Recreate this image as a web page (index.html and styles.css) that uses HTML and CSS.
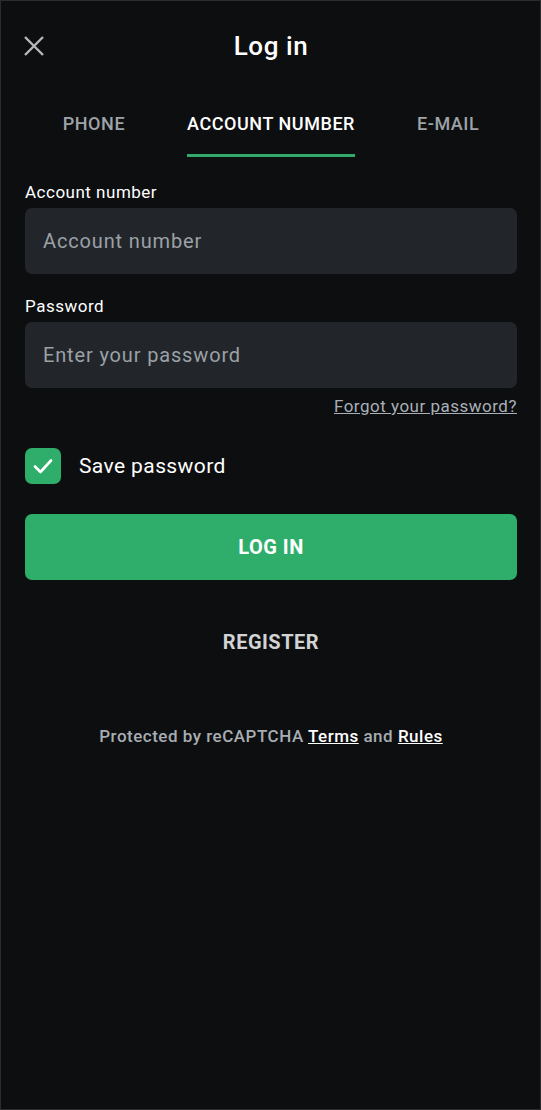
FILE: index.html
```html
<!DOCTYPE html>
<html lang="en">
<head>
    <meta charset="UTF-8">
    <meta name="viewport" content="width=device-width, initial-scale=1.0">
    <title>Log in</title>
    <link rel="stylesheet" href="styles.css">
</head>
<body>
    <div class="modal">
        <div class="header">
            <button class="close" type="button" aria-label="Close">
                <svg width="22" height="22" viewBox="0 0 22 22">
                    <path d="M2 2 L20 20 M20 2 L2 20" stroke="#b4b8bc" stroke-width="2.4" fill="none"/>
                </svg>
            </button>
            <h1>Log in</h1>
        </div>

        <div class="tabs">
            <a href="#" class="tab">Phone</a>
            <a href="#" class="tab active">Account number</a>
            <a href="#" class="tab">E-mail</a>
        </div>

        <form class="form">
            <label for="account">Account number</label>
            <input type="text" id="account" placeholder="Account number">

            <label for="password" class="second">Password</label>
            <input type="password" id="password" placeholder="Enter your password">

            <div class="forgot"><a href="#">Forgot your password?</a></div>

            <div class="save">
                <span class="checkbox">
                    <svg width="22" height="22" viewBox="0 0 22 22">
                        <path d="M3 11.5 L8.5 17 L19 5.5" stroke="#fff" stroke-width="2.6" fill="none" stroke-linecap="round" stroke-linejoin="round"/>
                    </svg>
                </span>
                <span>Save password</span>
            </div>

            <button type="button" class="login">Log in</button>
            <button type="button" class="register">Register</button>

            <p class="captcha">Protected by reCAPTCHA <a href="#">Terms</a> and <a href="#">Rules</a></p>
        </form>
    </div>
</body>
</html>
```

FILE: styles.css
```css
html, body {
    margin: 0;
    padding: 0;
}

body {
    background-color: #0d0e10;
    color: white;
    font-family: Roboto, "Noto Sans", Arial, sans-serif;
    letter-spacing: 0.5px;
}

.modal {
    height: 1110px;
    box-sizing: border-box;
    border: 1px solid #2b2c2e;
    padding: 0 23px 0 24px;
}

.header {
    display: flex;
    align-items: center;
    justify-content: center;
    height: 90px;
    position: relative;
}

.header h1 {
    margin: 0;
    font-size: 26px;
    font-weight: 500;
    letter-spacing: 0.6px;
}

.close {
    position: absolute;
    left: -2px;
    top: 34px;
    background: none;
    border: none;
    padding: 0;
    width: 22px;
    height: 22px;
    cursor: pointer;
}

.tabs {
    display: flex;
    justify-content: center;
    gap: 62px;
    height: 66px;
}

.tab {
    color: #9ea3a8;
    text-decoration: none;
    text-transform: uppercase;
    font-size: 18px;
    font-weight: 500;
    letter-spacing: 0.55px;
    padding-top: 22px;
    box-sizing: border-box;
    height: 66px;
    border-bottom: 3px solid transparent;
}

.tab.active {
    color: white;
    border-bottom-color: #30a96a;
}

.form {
    display: flex;
    flex-direction: column;
    padding-top: 24px;
}

label {
    font-size: 17px;
    line-height: 22px;
    margin-bottom: 5px;
}

label.second {
    margin-top: 21px;
}

input {
    height: 66px;
    box-sizing: border-box;
    border: none;
    border-radius: 7px;
    background-color: #22262a;
    color: white;
    padding: 0 18px;
    font-family: inherit;
    font-size: 20px;
    letter-spacing: 0.85px;
    outline: none;
}

input::placeholder {
    color: #9ba1a7;
}

.forgot {
    text-align: right;
    margin-top: 7px;
    line-height: 22px;
}

.forgot a {
    color: #a9b0b7;
    font-size: 17px;
}

.save {
    display: flex;
    align-items: center;
    gap: 18px;
    margin-top: 30px;
    font-size: 21px;
    letter-spacing: 0.4px;
}

.checkbox {
    width: 36px;
    height: 36px;
    border-radius: 7px;
    background-color: #2fae6b;
    display: flex;
    align-items: center;
    justify-content: center;
}

.login {
    margin-top: 30px;
    height: 66px;
    border: none;
    border-radius: 7px;
    background-color: #2fae6b;
    color: white;
    font-family: inherit;
    font-size: 20px;
    font-weight: 700;
    letter-spacing: 0.5px;
    text-transform: uppercase;
    cursor: pointer;
}

.register {
    margin-top: 29px;
    height: 66px;
    border: none;
    background: none;
    color: #d2d3d4;
    font-family: inherit;
    font-size: 20px;
    font-weight: 700;
    letter-spacing: 0.5px;
    text-transform: uppercase;
    cursor: pointer;
}

.captcha {
    text-align: center;
    color: #a7adb3;
    font-size: 17px;
    line-height: 20px;
    font-weight: 500;
    margin: 51px 0 0;
}

.captcha a {
    color: white;
}
```
